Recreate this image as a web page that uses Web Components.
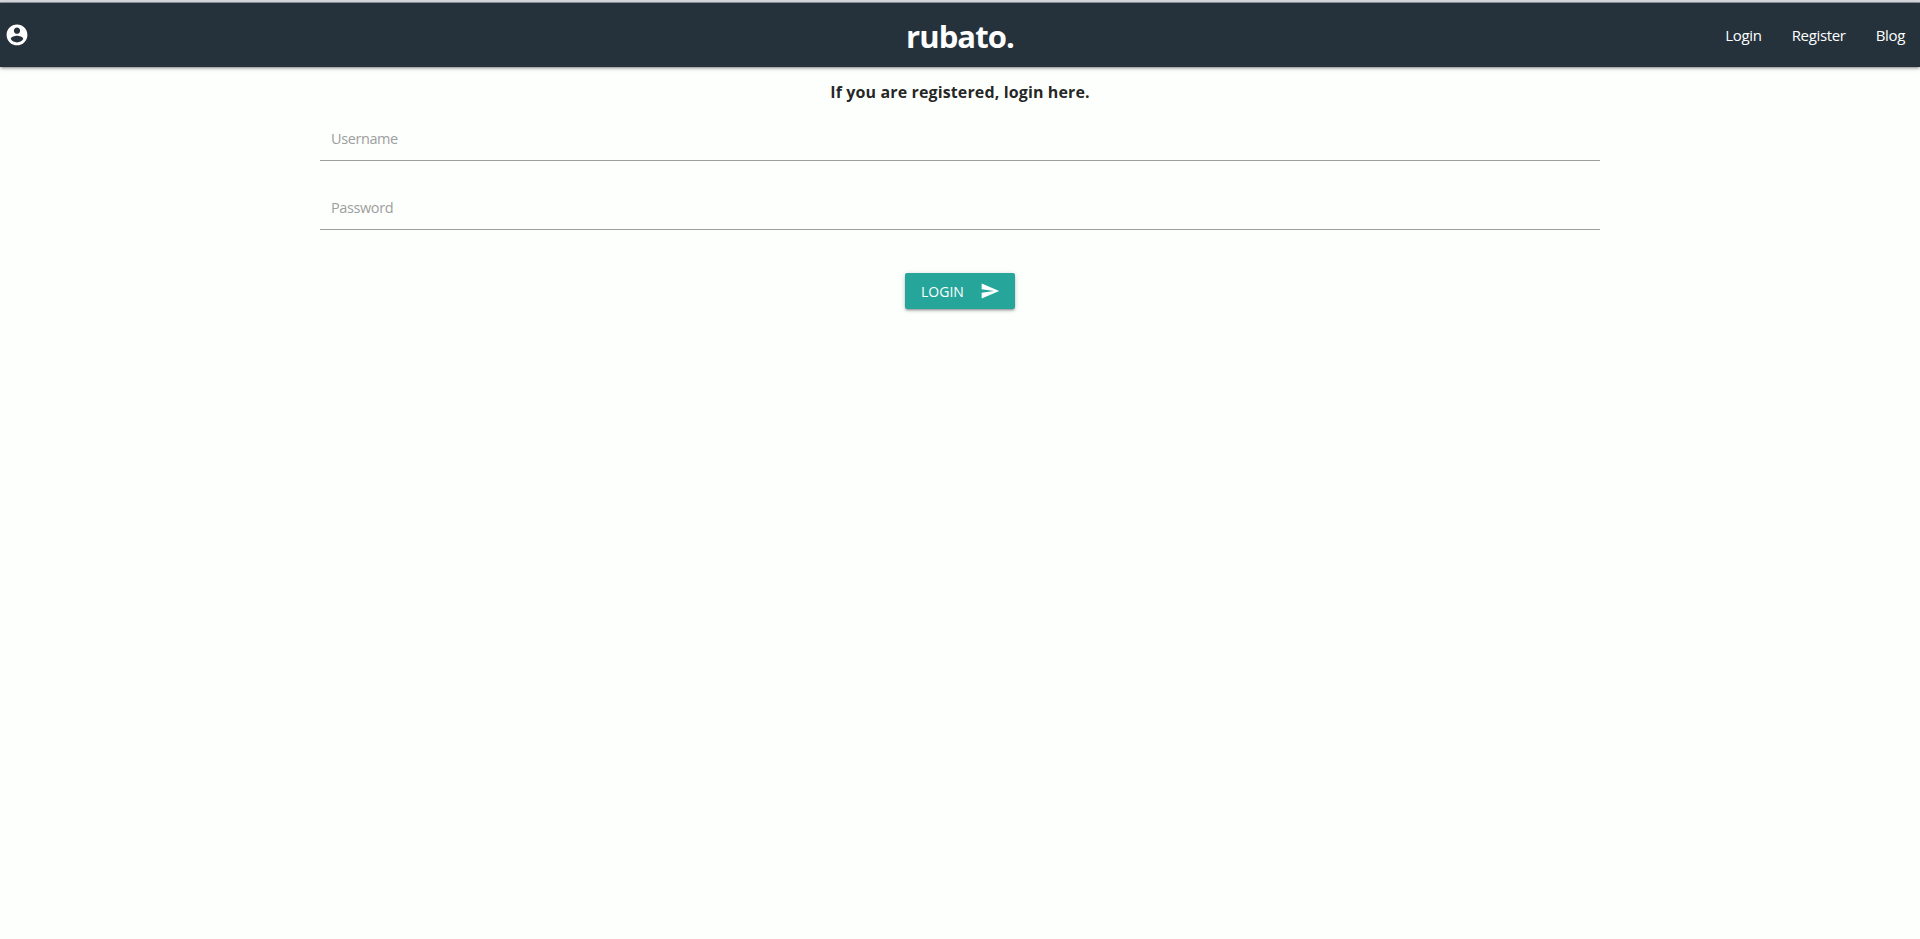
<!DOCTYPE html>
<html lang="en">
<head>
<meta charset="utf-8">
<title>rubato.</title>
<style>
html,body{margin:0;height:100%;background:#fcfffc;overflow:hidden}
body{font-family:"Open Sans","Noto Sans",sans-serif;font-size:15px;color:rgba(0,0,0,.87)}
</style>
</head>
<body>
<rubato-app></rubato-app>
<script>
const define = (name, html) => {
  const template = document.createElement('template');
  template.innerHTML = html;
  customElements.define(name, class extends HTMLElement {
    constructor() {
      super();
      this.attachShadow({mode: 'open'}).append(template.content.cloneNode(true));
    }
  });
};

define('nav-link', `<style>
:host{display:block;padding:0 15px}
a{display:block;color:#fff;font-size:15px;line-height:64px;height:64px;letter-spacing:-.33px;white-space:nowrap}
</style><a><slot></slot></a>`);

define('nav-bar', `<style>
:host{display:grid;grid-template-columns:1fr auto 1fr;height:64px;background:#25323b;box-shadow:0 2px 2px 0 rgba(0,0,0,.14),0 3px 1px -2px rgba(0,0,0,.12),0 1px 5px 0 rgba(0,0,0,.2)}
svg{display:block;width:25px;height:25px;margin:19px 0 0 4px;transform:translate(.5px,.4px);fill:#fff}
.brand{color:#fff;font-weight:700;font-size:31px;line-height:66px;height:64px;letter-spacing:-.9px}
nav{display:flex;justify-content:flex-end}
</style>
<svg viewBox="0 0 24 24"><path d="M12 2C6.48 2 2 6.48 2 12s4.48 10 10 10 10-4.48 10-10S17.52 2 12 2zm0 3c1.66 0 3 1.34 3 3s-1.34 3-3 3-3-1.34-3-3 1.34-3 3-3zm0 14.2c-2.5 0-4.71-1.28-6-3.22.03-1.99 4-3.08 6-3.08 1.99 0 5.97 1.09 6 3.08-1.29 1.94-3.5 3.22-6 3.22z"/></svg>
<div class="brand"><slot name="brand"></slot></div>
<nav><slot></slot></nav>`);

define('text-field', `<style>
:host{display:block;margin-bottom:20px}
div{height:48px;line-height:53px;padding-left:11px;border-bottom:1px solid #9e9e9e;color:#9e9e9e;font-size:14.5px;letter-spacing:-.4px}
</style><div><slot></slot></div>`);

define('send-button', `<style>
:host{display:flex;width:110px;height:36px;box-sizing:border-box;padding:0 15px 0 16px;align-items:center;justify-content:space-between;border-radius:2px;background:#26a69a;color:#fff;font-size:14px;box-shadow:0 2px 2px 0 rgba(0,0,0,.14),0 3px 1px -2px rgba(0,0,0,.12),0 1px 5px 0 rgba(0,0,0,.2)}
svg{width:20px;height:20px;fill:#fff}
</style><span><slot></slot></span><svg viewBox="0 0 24 24"><path d="M2.01 21L23 12 2.01 3 2 10l15 2-15 2z"/></svg>`);

define('login-form', `<style>
:host{display:flex;flex-direction:column;align-items:center;width:1280px;margin:0 auto}
h1{margin:0;height:45px;font-size:16px;line-height:50px;font-weight:700;letter-spacing:.13px}
text-field{width:100%}
send-button{margin-top:23px}
</style>
<h1>If you are registered, login here.</h1>
<text-field>Username</text-field>
<text-field>Password</text-field>
<send-button>LOGIN</send-button>`);

define('rubato-app', `<style>
:host{display:block}
.edge{height:2px;background:#d7d9de;border-bottom:1px solid #90969c}
</style>
<div class="edge"></div>
<nav-bar><span slot="brand">rubato.</span><nav-link>Login</nav-link><nav-link>Register</nav-link><nav-link>Blog</nav-link></nav-bar>
<login-form></login-form>`);
</script>
</body>
</html>
